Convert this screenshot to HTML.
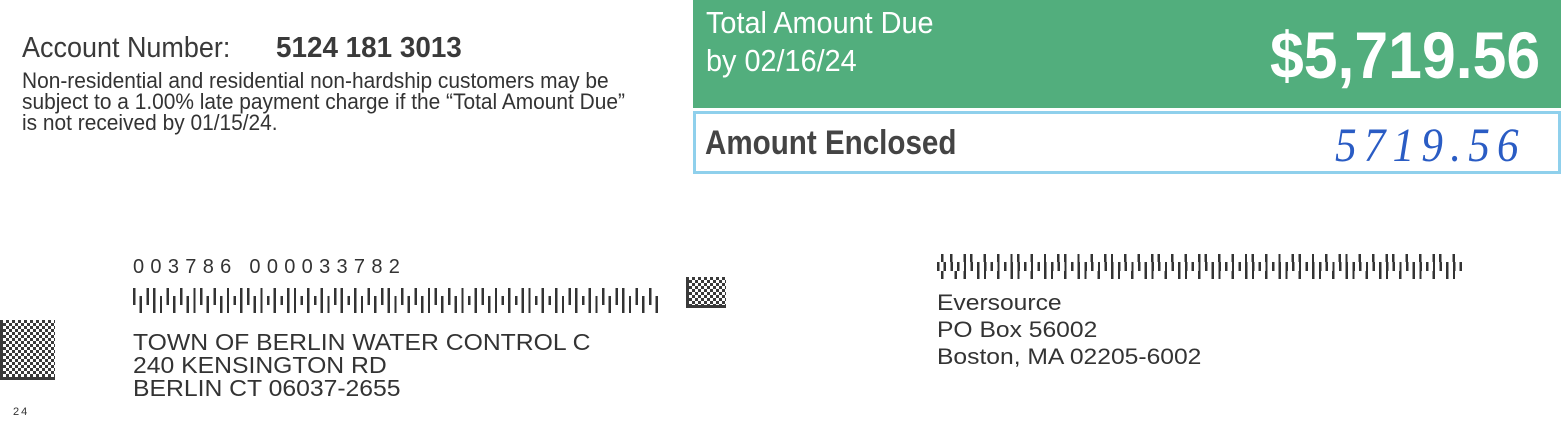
<!DOCTYPE html>
<html><head><style>
body{margin:0;width:1561px;height:438px;background:#fff;position:relative;overflow:hidden;font-family:"Liberation Sans",Arial,sans-serif;color:#333}
.a{position:absolute;white-space:nowrap;transform-origin:0 0}
.mid{position:absolute;left:0;right:0;top:8px;height:9px;background:repeating-linear-gradient(90deg,#333 0 2.4px,transparent 2.4px 6.7px)}
.top{position:absolute;left:0;right:0;top:0;height:8px;background:repeating-linear-gradient(90deg,#333 0 2.4px,transparent 2.4px 13.4px,#333 13.4px 15.8px,transparent 15.8px 20.1px,#333 20.1px 22.5px,transparent 22.5px 33.5px,#333 33.5px 35.9px,transparent 35.9px 46.9px)}
.bot{position:absolute;left:0;right:0;top:17px;height:8px;background:repeating-linear-gradient(90deg,transparent 0 6.7px,#333 6.7px 9.1px,transparent 9.1px 20.1px,#333 20.1px 22.5px,transparent 22.5px 26.8px,#333 26.8px 29.2px,transparent 29.2px 33.5px)}
.dm{position:absolute;background:repeating-conic-gradient(#3a3a3a 0 25%,#fff 0 50%) 0 0/6px 6px;border-left:3px solid #3a3a3a;border-bottom:3px solid #3a3a3a}
</style></head><body>
<div class="a" style="left:22px;top:32px;font-size:29px;transform:scaleX(0.93);color:#3a3a3a">Account Number:</div>
<div class="a" style="left:276px;top:32px;font-size:29px;font-weight:bold;transform:scaleX(0.96);color:#3a3a3a">5124 181 3013</div>
<div class="a" style="left:22px;top:70px;font-size:22px;line-height:21px;transform:scaleX(0.95);color:#333">Non-residential and residential non-hardship customers may be<br>subject to a 1.00% late payment charge if the “Total Amount Due”<br>is not received by 01/15/24.</div>

<div class="a" style="left:693px;top:0;width:868px;height:108px;background:#52ae7d"></div>
<div class="a" style="left:706px;top:4px;font-size:31px;line-height:38px;color:#fff;transform:scaleX(0.93)">Total Amount Due<br>by 02/16/24</div>
<div class="a" style="left:1270px;top:17px;font-size:66px;font-weight:bold;color:#fff;transform:scaleX(0.92)">$5,719.56</div>
<div class="a" style="left:693px;top:111px;width:862px;height:57px;border:3px solid #8fd0ec"></div>
<div class="a" style="left:705px;top:124px;font-size:34px;font-weight:bold;color:#444;transform:scaleX(0.87)">Amount Enclosed</div>
<div class="a" style="left:1335px;top:118px;font-size:48px;font-style:italic;color:#2a5cc4;font-family:'Liberation Serif',serif;letter-spacing:8px;transform:scaleX(0.9)">5719.56</div>

<div class="a" style="left:133px;top:256px;font-size:20px;letter-spacing:6.3px;color:#333">003786 000033782</div>
<div class="a" style="left:133px;top:288px;width:527px;height:25px"><div class="top"></div><div class="mid"></div><div class="bot"></div></div>
<div class="a" style="left:937px;top:254px;width:525px;height:25px"><div class="top" style="background-position:13px 0"></div><div class="mid"></div><div class="bot" style="background-position:20px 0"></div></div>
<div class="dm" style="left:686px;top:277px;width:37px;height:28px"></div>
<div class="dm" style="left:0;top:320px;width:52px;height:57px"></div>
<div class="a" style="left:13px;top:406px;font-size:11px;letter-spacing:2px">24</div>

<div class="a" style="left:133px;top:331px;font-size:23px;line-height:23px;color:#333;transform:scaleX(1.075)">TOWN OF BERLIN WATER CONTROL C<br>240 KENSINGTON RD<br>BERLIN CT 06037-2655</div>
<div class="a" style="left:937px;top:289px;font-size:22px;line-height:27px;color:#333;transform:scaleX(1.12)">Eversource<br>PO Box 56002<br>Boston, MA 02205-6002</div>
</body></html>
